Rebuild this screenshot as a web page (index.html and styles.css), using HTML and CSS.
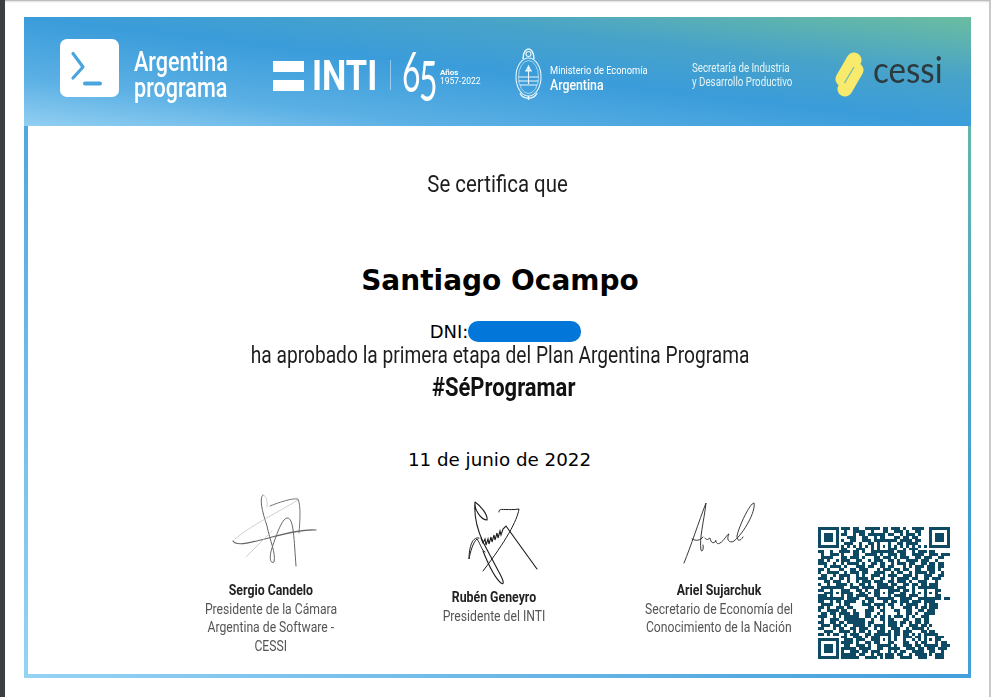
FILE: index.html
```html
<!DOCTYPE html>
<html lang="es">
<head>
<meta charset="utf-8">
<title>Certificado</title>
<link rel="stylesheet" href="styles.css">
</head>
<body>
<div class="viewer">
  <div class="strip"></div>
  <div class="sheet">
    <div class="frame">
      <header class="banner">
        <svg class="ap-logo" width="59" height="58" viewBox="0 0 59 58"><rect width="59" height="58" rx="7" fill="#fff"/><path d="M13 14.5 23 28 13 39" fill="none" stroke="#4aa5de" stroke-width="3.2" stroke-linecap="round" stroke-linejoin="round"/><path d="M25 44.5H40" stroke="#4aa5de" stroke-width="4" stroke-linecap="round"/></svg>
        <div class="ap-text"><span class="sq-ap">Argentina programa</span></div>
        <div class="inti-bars"><span></span><span></span></div>
        <div class="inti-text"><span class="squeeze sq-inti">INTI</span></div>
        <div class="inti-sep"></div>
        <div class="sixty"><span class="digit digit-six">6</span><span class="digit digit-five">5</span></div>
        <div class="anos"><b>Años</b><span>1957-2022</span></div>
        <svg class="escudo" width="27" height="54" viewBox="0 0 27 54" fill="none" stroke="#eaf6fc" stroke-width="1.100">
          <ellipse cx="13.5" cy="30" rx="12.5" ry="19"/>
          <ellipse cx="13.5" cy="30" rx="10" ry="16.5" stroke-width=".6"/>
          <path d="M8 12C8 5 11 2 13.5 2S19 5 19 12" stroke-width="1.5"/>
          <circle cx="13.5" cy="7" r="2.5"/>
          <path d="M3.5 30H23.5M3.5 34H23.5M5 38H22M13.500 20V37M10 24h7M13.500 19l-2 4 4 0z"/>
          <path d="M5 46C8 53 19 53 22 46M13.500 49V53" stroke-width="1.400"/>
        </svg>
        <div class="ministerio"><span class="squeeze sq-min">Ministerio de Economía</span><b class="squeeze sq-arg">Argentina</b></div>
        <div class="secretaria"><span class="squeeze sq-sec">Secretaría de Industria</span><span class="squeeze sq-sec">y Desarrollo Productivo</span></div>
        <svg class="cessi-mark" width="29" height="45" viewBox="0 0 29 45"><path d="M19 8 8 27" stroke="#f7ea6c" stroke-width="15" stroke-linecap="round"/><path d="M21 18 10 37" stroke="#f7ea6c" stroke-width="15" stroke-linecap="round"/><path d="M19 15 9.500 31" stroke="#6fb7b0" stroke-width="1.200"/></svg>
        <div class="cessi-text">cessi</div>
      </header>
      <main class="body">
        <p class="lead"><span class="squeeze sq-lead">Se certifica que</span></p>
        <h1 class="name">Santiago Ocampo</h1>
        <p class="dni">DNI:<span class="redact"></span></p>
        <p class="passed"><span class="squeeze sq-passed">ha aprobado la primera etapa del Plan Argentina Programa</span></p>
        <p class="tag"><span class="squeeze sq-tag">#SéProgramar</span></p>
        <p class="date">11 de junio de 2022</p>
        <section class="signers">
          <div class="signer">
            <svg class="sig" width="190" height="90" viewBox="176 490 190 90" fill="none" stroke="#666" stroke-linecap="round">
              <path d="M233 540C236 546 254 541 272 536 288 532 304 528 316 529" stroke-width="1.200"/>
              <path d="M263 494C259 497 262 510 267 525 270 540 276 552 274 561 270 563 269 556 272 547 277 532 282 518 287 517 294 516 294 540 296 565" stroke-width="1"/>
              <path d="M270 505C280 501 292 497 298 498 301 505 300 520 299 532" stroke-width=".9"/>
              <path d="M298 499C280 510 250 525 235 538M263 494C266 494 268 500 267 506M246 556 272 530" stroke="#c4c4c4" stroke-width=".8"/>
            </svg>
            <strong class="squeeze sq-name">Sergio Candelo</strong>
            <span class="squeeze sq-role">Presidente de la Cámara</span>
            <span class="squeeze sq-role">Argentina de Software -</span>
            <span class="squeeze sq-role">CESSI</span>
          </div>
          <div class="signer signer-low">
            <svg class="sig" width="190" height="90" viewBox="398 497 190 90" fill="none" stroke="#1c1c1c" stroke-linecap="round">
              <path d="M474 501C480 505 487 514 486 519 481 519 473 510 474 501 473 513 476 528 482 541L500 575C503 581 503 584 500 582 495 578 488 565 482 550" stroke-width="1.100"/>
              <path d="M480 537 482 542 484 538 485 544 487 538 488 543 490 536 491 541 493 534 494 539 496 532 497 537 499 530 500 534 502 528 505 525L536 568" stroke-width="1.100"/>
              <path d="M498 511C497 506 505 510 518 508 516 520 505 540 482 570" stroke-width="1"/>
              <path d="M478 537C470 535 468 550 468 558 469 552 472 541 476 538 480 544 481 550 484 551" stroke-width="1"/>
            </svg>
            <strong class="squeeze sq-name">Rubén Geneyro</strong>
            <span class="squeeze sq-role">Presidente del INTI</span>
          </div>
          <div class="signer signer-right">
            <svg class="sig" width="190" height="90" viewBox="625 490 190 90" fill="none" stroke="#222" stroke-linecap="round" stroke-width=".9">
              <path d="M685 562C692 545 700 520 707 502 705 520 700 538 702 549 703 552 705 548 704 544M693 538C697 540 701 540 704 536"/>
              <path d="M706 537C708 540 709 538 711 537 712 542 714 543 717 540 716 537 717 545 721 542 725 540 728 533 730 533 727 538 730 543 735 540 745 532 757 510 755 502 751 502 740 525 738 535 738 540 741 541 744 536"/>
            </svg>
            <strong class="squeeze sq-name">Ariel Sujarchuk</strong>
            <span class="squeeze sq-role">Secretario de Economía del</span>
            <span class="squeeze sq-role">Conocimiento de la Nación</span>
          </div>
          <svg class="qr" width="132" height="132" viewBox="0 0 45 45" shape-rendering="crispEdges">
            <path class="qr-data" d="M8 .5h3m1 0h2m2 0h5m1 0h2m1 0h3m1 0h1m2 0h4
M9 1.500h1m2 0h4m2 0h1m3 0h2m2 0h3m1 0h1m2 0h2
M8 2.500h2m2 0h1m1 0h2m1 0h6m1 0h2m2 0h1m1 0h3m1 0h1
M10 3.500h3m2 0h2m2 0h1m1 0h2m3 0h2m1 0h2m1 0h2
M8 4.500h1m2 0h2m2 0h3m1 0h1m4 0h3m1 0h4m1 0h2
M9 5.500h3m2 0h1m2 0h2m1 0h1m3 0h1m2 0h2m1 0h4
M8 6.500h1m1 0h1m1 0h1m1 0h1m1 0h1m1 0h1m1 0h1m1 0h1m1 0h1m1 0h1m1 0h1m1 0h1m1 0h1m1 0h1m1 0h1
M8 7.500h2m3 0h3m2 0h1m1 0h2m2 0h3m2 0h1m1 0h3
M0 8.500h2m2 0h1m2 0h4m1 0h2m1 0h1m2 0h4m2 0h2m1 0h3m2 0h1m1 0h3m1 0h2
M1 9.500h1m2 0h3m1 0h1m3 0h2m2 0h4m1 0h1m2 0h3m1 0h2m2 0h4m2 0h3m1 0h3
M1 10.500h4m3 0h2m1 0h3m1 0h1m3 0h2m1 0h3m1 0h1m1 0h3m2 0h2m1 0h3m2 0h2
M0 11.500h2m1 0h1m2 0h1m1 0h3m2 0h2m2 0h1m1 0h3m2 0h2m1 0h1m2 0h4m1 0h3m2 0h1
M0 12.500h3m2 0h1m2 0h1m1 0h4m1 0h1m2 0h2m1 0h2m2 0h1m1 0h3m1 0h2m2 0h2m1 0h2m1 0h2
M2 13.500h1m1 0h4m1 0h1m3 0h3m1 0h2m2 0h2m1 0h2m3 0h1m1 0h1m1 0h3m1 0h3m1 0h2
M0 14.500h2m1 0h1m3 0h2m2 0h2m1 0h3m3 0h1m1 0h3m1 0h2m1 0h2m2 0h2m2 0h3m1 0h1
M0 15.500h1m2 0h4m2 0h1m1 0h3m1 0h2m2 0h4m2 0h1m1 0h2m2 0h1m1 0h4m1 0h2m2 0h1
M1 16.500h2m2 0h1m1 0h4m2 0h1m1 0h1m2 0h3m1 0h1m1 0h3m2 0h3m1 0h1m2 0h3m2 0h2
M0 17.500h3m1 0h1m2 0h2m1 0h1m2 0h4m1 0h1m2 0h2m2 0h1m1 0h4m1 0h2m2 0h2m1 0h3
M2 18.500h2m1 0h3m2 0h1m2 0h1m1 0h3m1 0h3m2 0h2m1 0h3m1 0h1m2 0h3m3 0h1
M0 19.500h1m2 0h1m2 0h4m1 0h1m2 0h2m1 0h1m2 0h4m1 0h2m2 0h2m1 0h2m1 0h2m1 0h3
M1 20.500h3m2 0h1m1 0h1m2 0h3m1 0h4m3 0h2m1 0h1m1 0h3m2 0h1m1 0h3m1 0h2
M0 21.500h2m3 0h3m1 0h2m2 0h2m1 0h1m2 0h1m5 0h3m1 0h2m1 0h1m5 0h4
M2 22.500h2m5 0h3m2 0h2m1 0h1m1 0h1m1 0h1m1 0h3m2 0h2m2 0h1m1 0h1m1 0h1m1 0h3
M0 23.500h3m7 0h2m1 0h4m2 0h3m1 0h2m1 0h4m1 0h3m3 0h2m1 0h2
M0 24.500h5m5 0h4m2 0h3m1 0h6m2 0h4m2 0h5m1 0h2m1 0h2
M0 25.500h2m2 0h1m1 0h2m1 0h4m2 0h1m1 0h2m3 0h2m1 0h2m1 0h3m1 0h3m1 0h4
M1 26.500h4m2 0h1m1 0h2m4 0h3m1 0h4m1 0h2m2 0h1m1 0h4m2 0h1m1 0h3
M0 27.500h2m1 0h1m2 0h3m1 0h2m5 0h2m1 0h1m1 0h1m2 0h1m3 0h3m1 0h1m1 0h2m1 0h3
M0 28.500h1m2 0h4m1 0h2m2 0h1m3 0h3m2 0h2m3 0h2m2 0h2m2 0h2m1 0h3
M1 29.500h2m1 0h2m1 0h4m1 0h2m2 0h2m2 0h1m1 0h1m4 0h1m2 0h2m1 0h1m2 0h4
M0 30.500h3m2 0h1m1 0h1m1 0h5m2 0h2m1 0h1m1 0h2m1 0h1m1 0h3m1 0h1m1 0h1m2 0h3
M1 31.500h1m2 0h3m2 0h7m2 0h1m2 0h2m1 0h2m3 0h2m2 0h2m1 0h2
M0 32.500h2m2 0h2m1 0h2m1 0h6m1 0h2m3 0h1m1 0h3m1 0h2m1 0h1m1 0h2m1 0h2
M1 33.500h3m1 0h3m1 0h1m2 0h4m1 0h1m1 0h4m1 0h3m1 0h1m2 0h3m1 0h2m1 0h1
M0 34.500h2m3 0h1m1 0h2m2 0h2m1 0h3m2 0h1m1 0h2m2 0h3m2 0h1m1 0h4m1 0h1
M2 35.500h3m2 0h4m1 0h1m1 0h2m1 0h1m2 0h3m1 0h1m1 0h2m1 0h3m3 0h2m1 0h2
M0 36.500h2m1 0h1m1 0h2m2 0h1m1 0h3m2 0h2m1 0h1m1 0h3m2 0h2m1 0h2m1 0h1m1 0h1m1 0h2
M8 37.500h2m2 0h3m1 0h1m1 0h2m2 0h3m1 0h1m2 0h3m1 0h2m1 0h4m1 0h2
M9 38.500h3m1 0h3m2 0h4m1 0h2m1 0h1m2 0h1m2 0h1m1 0h1m3 0h1m1 0h2
M8 39.500h4m1 0h1m2 0h2m1 0h1m2 0h2m1 0h1m3 0h2m2 0h1m1 0h1m1 0h1m1 0h1m2 0h2
M9 40.500h2m2 0h3m1 0h1m2 0h4m2 0h1m2 0h3m1 0h2m2 0h4m1 0h3
M8 41.500h5m1 0h4m2 0h2m2 0h4m2 0h3m1 0h2m1 0h3m1 0h3
M8 42.500h1m2 0h3m1 0h2m1 0h3m3 0h1m1 0h1m1 0h2m2 0h4m2 0h2m2 0h1
M8 43.500h5m1 0h2m2 0h1m1 0h2m1 0h3m1 0h2m2 0h1m1 0h4m1 0h1m1 0h3
M8 44.500h6m2 0h4m1 0h1m1 0h3m2 0h4m2 0h3m3 0h3"/>
            <path class="qr-clear" d="M0 0h8v8H0zM37 0h8v8h-8zM0 37h8v8H0zM20 4h5v5h-5zM4 20h5v5H4zM20 20h5v5h-5zM36 20h5v5h-5zM20 36h5v5h-5zM36 36h5v5h-5z"/>
            <path class="qr-marks" d="M0 0h7v7H0zM1 1v5h5V1zM2 2h3v3H2zM38 0h7v7h-7zM39 1v5h5V1zM40 2h3v3h-3zM0 38h7v7H0zM1 39v5h5v-5zM2 40h3v3H2zM20 4h5v5h-5zM21 5v3h3V5zM22 6h1v1h-1zM4 20h5v5H4zM5 21v3h3v-3zM6 22h1v1H6zM20 20h5v5h-5zM21 21v3h3v-3zM22 22h1v1h-1zM36 20h5v5h-5zM37 21v3h3v-3zM38 22h1v1h-1zM20 36h5v5h-5zM21 37v3h3v-3zM22 38h1v1h-1zM36 36h5v5h-5zM37 37v3h3v-3zM38 38h1v1h-1z"/>
          </svg>
        </section>
      </main>
    </div>
  </div>
</div>
</body>
</html>
```

FILE: styles.css
```css
* { box-sizing: border-box; }
html, body { margin: 0; padding: 0; background: #fff; }
body { width: 996px; height: 697px; overflow: hidden; font-family: "Roboto", "Liberation Sans", sans-serif; }
p, h1 { margin: 0; }

.viewer { display: flex; height: 697px; }
.strip { width: 5px; flex: none; background: #3c3f42; }
.sheet {
  width: 986px;
  flex: none;
  padding: 16px 0 0 19px;
  background: #fff;
  border-top: 1px solid #bdbdbd;
  border-right: 2px solid #c9c9c9;
  box-shadow: inset 0 2px 2px -1px #ddd;
}

.frame {
  width: 947px;
  height: 661px;
  padding: 0 3px 4px 4px;
  background: linear-gradient(to top right, #95d3f4 0%, #46a0dc 48%, #3e9bd8 60%, #6bbd9f 100%);
  display: flex;
  flex-direction: column;
}

.banner {
  height: 109px;
  margin: 0 -3px 0 -4px;
  padding-left: 36px;
  flex: none;
  display: flex;
  align-items: center;
  color: #fff;
  background: linear-gradient(to top right, #92cff2 0%, #5bb0e4 22%, #3a9cda 50%, #48a3c9 72%, #6bbd9f 100%);
}

.squeeze { display: block; white-space: nowrap; }
.banner > *, .lead, .passed, .tag, .signer { filter: blur(.35px); }

.ap-logo { flex: none; margin: 1px 0 8px; }
.ap-text { width: 95px; margin-left: 15px; padding-top: 7px; font-size: 27px; font-weight: 500; line-height: 26px; }
.sq-ap { display: block; width: 125px; transform: scaleX(.8); transform-origin: left center; }
.inti-bars { width: 31px; margin-left: 44px; display: flex; flex-direction: column; gap: 8px; margin-top: 8px; }
.inti-bars span { height: 11px; background: #fff; }
.inti-text { width: 63px; margin-left: 8px; padding-top: 6px; font-size: 43px; font-weight: 700; line-height: 44px; }
.sq-inti { transform: scaleX(.8); transform-origin: left center; }
.inti-sep { width: 1px; height: 30px; margin: 7px 0 0 15px; background: rgba(255,255,255,.45); }
.sixty { width: 35px; margin-left: 11px; display: flex; font-family: "Lato", sans-serif; font-weight: 400; font-size: 57px; line-height: 56px; }
.digit { display: block; width: 17px; flex: none; }
.digit-six { transform: translateY(-2px) scaleX(.56); transform-origin: left center; }
.digit-five { transform: translateY(7px) scaleX(.56); transform-origin: left center; }
.anos { width: 40px; margin-left: 3px; display: flex; flex-direction: column; font-size: 8.500px; line-height: 9px; padding-top: 10px; white-space: nowrap; }
.anos b { font-size: 8px; }
.escudo { flex: none; margin: 4px 0 0 35px; }
.ministerio { width: 98px; margin-left: 8px; padding-top: 12px; }
.sq-min { font-size: 11.500px; line-height: 14px; transform: scaleX(.81); transform-origin: left center; }
.sq-arg { font-size: 14px; line-height: 16px; font-weight: 500; transform: scaleX(.88); transform-origin: left center; }
.secretaria { width: 100px; margin-left: 44px; padding-top: 7px; color: #e4f4f6; }
.sq-sec { font-size: 12.500px; line-height: 14.500px; transform: scaleX(.78); transform-origin: left center; }
.cessi-mark { flex: none; margin: 5px 0 0 43px; }
.cessi-text { margin-left: 9px; font-family: "Lato", sans-serif; font-size: 36px; line-height: 40px; color: #2c3a3e; margin-top: -5px; transform: scaleX(.92); transform-origin: left center; }

.body {
  flex: 1;
  min-height: 0;
  background: #fff;
  display: flex;
  flex-direction: column;
  align-items: center;
  padding-top: 43px;
}
.lead { height: 30px; font-size: 24px; line-height: 30px; color: #1e1e1e; }
.sq-lead { transform: scaleX(.851); }
.name { margin-top: 65px; padding-left: 4px; font-family: "DejaVu Sans", sans-serif; font-weight: 700; font-size: 28px; line-height: 34px; color: #000; }
.dni { margin-top: 23px; height: 22px; padding-left: 15px; display: flex; align-items: center; font-family: "DejaVu Sans", sans-serif; font-size: 18px; line-height: 22px; color: #000; }
.redact { width: 113px; height: 21px; margin-top: -2px; border-radius: 10px; background: #0276d9; }
.passed { height: 26px; margin-top: -1px; padding-left: 4px; font-size: 24px; line-height: 26px; color: #1e1e1e; }
.sq-passed { transform: scaleX(.799); }
.tag { margin-top: 5px; height: 30px; padding-left: 11px; font-size: 25px; line-height: 30px; font-weight: 700; color: #111; }
.sq-tag { transform: scaleX(.879); }
.date { margin-top: 45px; padding-left: 3px; font-family: "DejaVu Sans", sans-serif; font-size: 18.300px; line-height: 24px; color: #000; }

.signers { align-self: stretch; margin-top: 19px; padding-left: 148px; display: flex; align-items: flex-start; gap: 33px; }
.signer { width: 190px; flex: none; display: flex; flex-direction: column; align-items: center; font-size: 14px; line-height: 18.500px; color: #555; }
.signer-low { padding-top: 7px; }
.signer-right { margin-left: 2px; }
.sig { display: block; flex: none; }
.signer strong { color: #222; font-weight: 700; transform: scaleX(.88); }
.sq-role { transform: scaleX(.87); }
.qr { flex: none; margin: 36px 0 0 -29px; }
.qr-data { fill: none; stroke: #0e4a63; stroke-width: 1; }
.qr-clear { fill: #fff; }
.qr-marks { fill: #0e4a63; fill-rule: evenodd; }
```
